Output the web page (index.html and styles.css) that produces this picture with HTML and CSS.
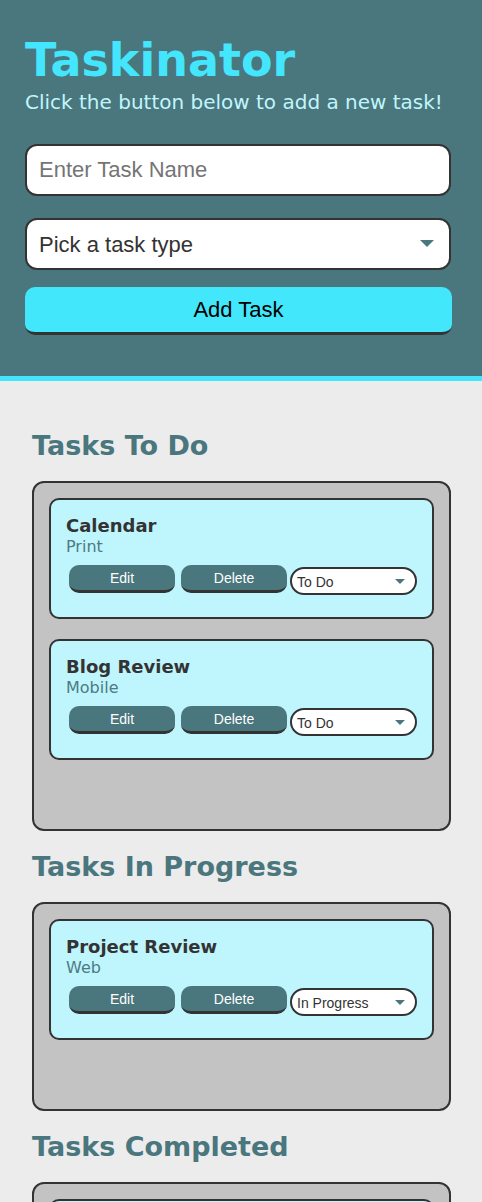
FILE: index.html
```html
<!DOCTYPE html>
<html lang="en">
<head>
<meta charset="utf-8">
<title>Taskinator</title>
<link rel="stylesheet" href="styles.css">
</head>
<body>
<header class="header">
  <h1 class="page-title">Taskinator</h1>
  <p class="lead">Click the button below to add a new task!</p>
  <form class="task-form">
    <input class="text-input" type="text" placeholder="Enter Task Name">
    <div class="select-wrap">
      <select class="select-input">
        <option>Pick a task type</option>
      </select>
      <span class="big-arrow"></span>
    </div>
    <button type="button" class="add-btn">Add Task</button>
  </form>
</header>
<main class="main">
  <section class="column">
    <h2 class="list-title">Tasks To Do</h2>
    <ul class="task-list">
      <li class="task">
        <h3 class="task-name">Calendar</h3>
        <span class="task-type">Print</span>
        <div class="actions">
          <button type="button" class="act-btn">Edit</button>
          <button type="button" class="act-btn">Delete</button>
          <div class="status-wrap"><select class="status"><option>To Do</option></select><span class="small-arrow"></span></div>
        </div>
      </li>
      <li class="task">
        <h3 class="task-name">Blog Review</h3>
        <span class="task-type">Mobile</span>
        <div class="actions">
          <button type="button" class="act-btn">Edit</button>
          <button type="button" class="act-btn">Delete</button>
          <div class="status-wrap"><select class="status"><option>To Do</option></select><span class="small-arrow"></span></div>
        </div>
      </li>
    </ul>
  </section>
  <section class="column">
    <h2 class="list-title">Tasks In Progress</h2>
    <ul class="task-list">
      <li class="task">
        <h3 class="task-name">Project Review</h3>
        <span class="task-type">Web</span>
        <div class="actions">
          <button type="button" class="act-btn">Edit</button>
          <button type="button" class="act-btn">Delete</button>
          <div class="status-wrap"><select class="status"><option>In Progress</option></select><span class="small-arrow"></span></div>
        </div>
      </li>
    </ul>
  </section>
  <section class="column">
    <h2 class="list-title">Tasks Completed</h2>
    <ul class="task-list">
      <li class="task">
        <h3 class="task-name">Wireframes</h3>
        <span class="task-type">Print</span>
        <div class="actions">
          <button type="button" class="act-btn">Edit</button>
          <button type="button" class="act-btn">Delete</button>
          <div class="status-wrap"><select class="status"><option>Completed</option></select><span class="small-arrow"></span></div>
        </div>
      </li>
    </ul>
  </section>
</main>
</body>
</html>
```

FILE: styles.css
```css
* { box-sizing: border-box; }

html, body {
  margin: 0;
  padding: 0;
}

body {
  background: #ececec;
  font-family: "DejaVu Sans", Verdana, sans-serif;
  color: #333;
}

.header {
  background: #4a767d;
  border-bottom: 5px solid #43e6fc;
  padding: 30px 31px 41px 25px;
}

.page-title {
  margin: 0;
  font-size: 46px;
  line-height: 60px;
  font-weight: bold;
  color: #43e6fc;
}

.lead {
  margin: 0;
  font-size: 20px;
  line-height: 24px;
  color: #c1f5fc;
}

.task-form {
  margin-top: 30px;
  display: flex;
  flex-direction: column;
}

.text-input,
.select-input {
  width: 100%;
  height: 52px;
  border: 2px solid #333;
  border-radius: 12px;
  background: #fff;
  font-family: "Liberation Sans", Arial, sans-serif;
  font-size: 22px;
  padding: 0 12px;
  color: #333;
  outline: none;
}

.text-input::placeholder { color: #757575; }

.select-wrap {
  position: relative;
  margin-top: 22px;
}

.select-input {
  appearance: none;
  -webkit-appearance: none;
  display: block;
}

.big-arrow {
  position: absolute;
  right: 17px;
  top: 22px;
  width: 0;
  height: 0;
  border-left: 7px solid transparent;
  border-right: 7px solid transparent;
  border-top: 7px solid #4a767d;
}

.add-btn {
  margin-top: 17px;
  width: 427px;
  height: 48px;
  border: none;
  border-bottom: 3px solid #333;
  border-radius: 10px;
  background: #43e7fc;
  color: #000;
  font-family: "Liberation Sans", Arial, sans-serif;
  font-size: 22px;
  padding: 0;
}

.main {
  padding: 48px 31px 0 32px;
}

.list-title {
  margin: 0;
  font-size: 27px;
  line-height: 33px;
  font-weight: bold;
  color: #4a767d;
}

.task-list {
  list-style: none;
  margin: 19px 0 19px;
  padding: 15px 15px 49px;
  background: #c3c3c3;
  border: 2px solid #333;
  border-radius: 12px;
}

.task {
  background: #bff5fd;
  border: 2px solid #333;
  border-radius: 10px;
  padding: 15px 15px 22px;
  margin-bottom: 20px;
}

.task-name {
  margin: 0;
  font-size: 18px;
  line-height: 22px;
  font-weight: bold;
  color: #333;
}

.task-type {
  display: block;
  font-size: 16px;
  line-height: 20px;
  color: #4e7b82;
}

.actions {
  display: flex;
  align-items: flex-start;
  margin-top: 8px;
}

.act-btn {
  width: 106px;
  height: 28px;
  margin: 0 3px;
  border: none;
  border-bottom: 3px solid #333;
  border-radius: 10px;
  background: #4a767d;
  color: #fff;
  font-family: "Liberation Sans", Arial, sans-serif;
  font-size: 14px;
  padding: 0;
}

.status-wrap {
  position: relative;
  margin-top: 2px;
}

.status {
  appearance: none;
  -webkit-appearance: none;
  display: block;
  width: 127px;
  height: 28px;
  border: 2px solid #333;
  border-radius: 14px;
  background: #fff;
  font-family: "Liberation Sans", Arial, sans-serif;
  font-size: 14px;
  color: #333;
  padding: 2px 5px 0;
  outline: none;
}

.small-arrow {
  position: absolute;
  right: 12px;
  top: 12px;
  width: 0;
  height: 0;
  border-left: 5px solid transparent;
  border-right: 5px solid transparent;
  border-top: 5px solid #4a767d;
}
```
